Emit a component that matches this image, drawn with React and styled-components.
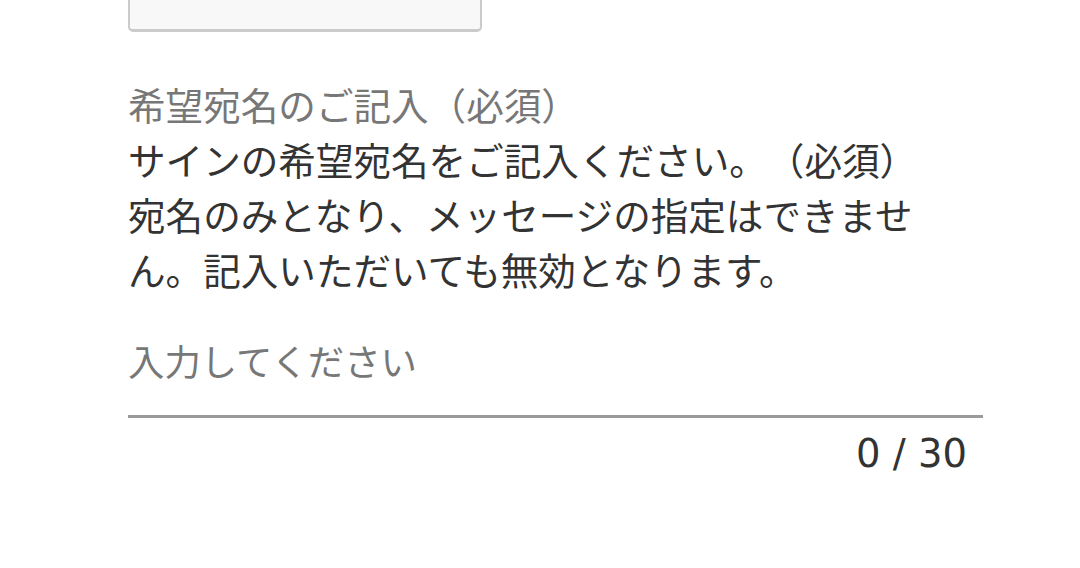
import React from "react";
import styled, { createGlobalStyle } from "styled-components";

const Global = createGlobalStyle`
  html, body { margin: 0; padding: 0; background: #fff; }
  body {
    font-family: "Noto Sans CJK JP", "DejaVu Sans", sans-serif;
    text-spacing-trim: space-all;
    font-feature-settings: "chws" 0, "halt" 0, "palt" 0;
  }
`;

const Page = styled.div`
  width: 1080px;
  height: 568px;
  overflow: hidden;
  box-sizing: border-box;
  padding: 0 97px 0 128px;
`;

const PrevField = styled.div`
  width: 354px;
  height: 60px;
  margin-top: -28px;
  box-sizing: border-box;
  border: 2px solid #cbcbcb;
  border-bottom-width: 3px;
  border-radius: 5px;
  background: #f8f8f8;
`;

const Section = styled.section`
  margin-top: 44px;
  font-size: 37.6px;
  line-height: 55px;
`;

const Label = styled.div`
  color: #777;
`;

const Description = styled.p`
  margin: 0;
  color: #333;
  padding-right: 40px;
`;

const InputWrap = styled.div`
  margin-top: 37px;
  border-bottom: 3px solid #9a9a9a;
`;

const Input = styled.input`
  display: block;
  width: 100%;
  box-sizing: border-box;
  border: none;
  outline: none;
  padding: 0 0 27px;
  font: inherit;
  font-family: "Noto Sans CJK JP", sans-serif;
  font-size: 36.4px;
  line-height: 55px;
  color: #333;
  background: transparent;
  &::placeholder { color: #777; }
`;

const Counter = styled.div`
  margin-top: 12px;
  padding-right: 16px;
  text-align: right;
  font-family: "DejaVu Sans", sans-serif;
  font-size: 38.5px;
  line-height: 48px;
  color: #333;
`;

export default function App() {
  return (
    <>
      <Global />
      <Page>
        <PrevField />
        <Section>
          <Label>希望宛名のご記入（必須）</Label>
          <Description>
            サインの希望宛名をご記入ください。（必須）
            <br />
            宛名のみとなり、メッセージの指定はできません。記入いただいても無効となります。
          </Description>
          <InputWrap>
            <Input placeholder="入力してください" />
          </InputWrap>
          <Counter>0 / 30</Counter>
        </Section>
      </Page>
    </>
  );
}
